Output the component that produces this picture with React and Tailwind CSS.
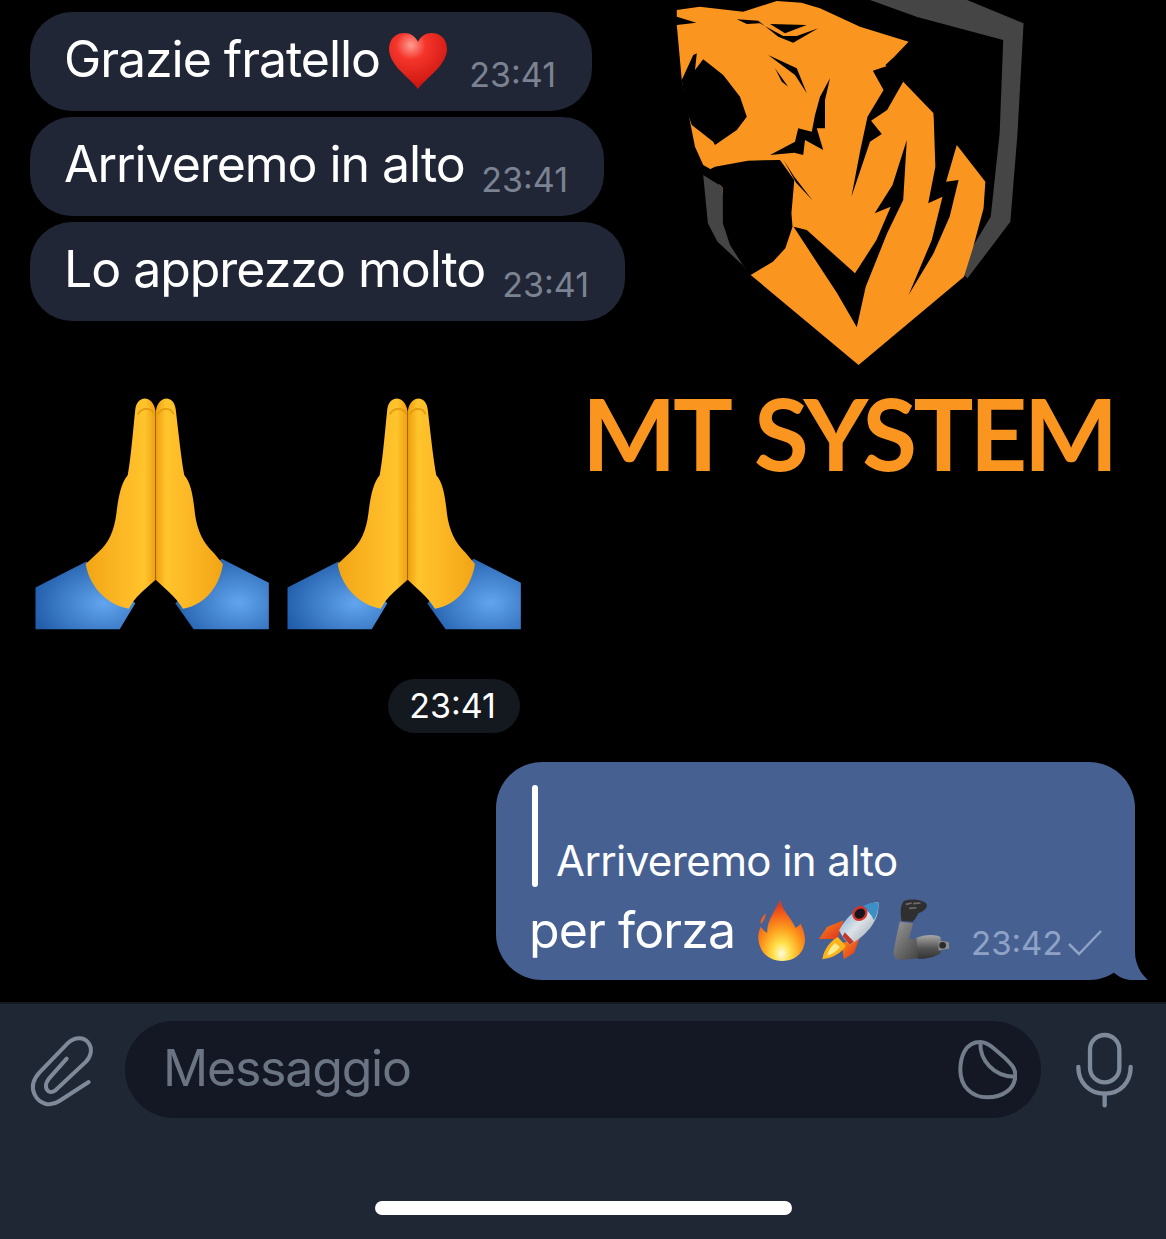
const FONT = 'font-["Inter","Liberation_Sans",sans-serif]';

const INCOMING = [
  { text: 'Grazie fratello', width: 'w-[562px]', heart: true },
  { text: 'Arriveremo in alto', width: 'w-[574px]' },
  { text: 'Lo apprezzo molto', width: 'w-[595px]' },
];

function Heart() {
  return (
    <svg width="60" height="58" viewBox="0 0 62 60" className="ml-[8px] mb-[2px] shrink-0">
      <defs>
        <radialGradient id="heartFill" cx="0.38" cy="0.22" r="0.85">
          <stop offset="0" stopColor="#ff9d92" />
          <stop offset="0.3" stopColor="#f5352b" />
          <stop offset="1" stopColor="#c40f0b" />
        </radialGradient>
      </defs>
      <path d="M31 59C24 48 2 36 1 18C1 7 8 1 17 1C23 1 28 4 31 10C34 4 39 1 45 1C54 1 61 7 61 18C60 36 38 48 31 59Z" fill="url(#heartFill)" />
    </svg>
  );
}

function TigerLogo() {
  // traced from the reference, stretched box so coordinates follow the crop
  return (
    <svg className="absolute left-[580px] top-0 h-[490px] w-[560px]" viewBox="0 0 1568 1470" preserveAspectRatio="none">
      <path fill="#454545" d="M812 0L1084 0L1242 70L1225 400L1205 665L1085 835L1060 810L1150 650L1175 400L1185 120L944 51Z" />
      <path fill="#fa951f" d="M271 30L335 20L457 35L551 3L620 8L672 25L784 80L920 125L880 170L855 195L905 245L990 340L1000 440L1055 435L1135 545L1130 625L1100 745L1075 830L780 1095L478 825L378 515L345 495L322 440L285 240L271 75L326 68L271 50Z" />
      <path fill="#000" d="M285 240L317 165L327 160L322 210L345 178L401 225L448 290L467 350L439 390L378 435L373 425L313 375L298 330Z" />
      <path fill="#000" d="M360 510L378 500L470 482L560 480L600 540L592 640L595 680L575 745L540 785L478 825L465 815L420 735L400 670L400 565L372 530Z" />
      <path fill="#454545" d="M345 525L400 562L400 670L420 735L468 815L455 795L385 725L358 670Z" />
      <path fill="#000" d="M439 58L499 62L555 110L597 128L667 85L607 108L569 108L504 70L467 72Z" />
      <path fill="#000" d="M532 72L635 75L574 100Z" />
      <path fill="#000" d="M527 165L607 205L635 280L602 225ZM546 205L583 260L565 245Z" />
      <path fill="#000" d="M700 235L672 290L658 345L649 395L611 385L602 425L532 465L600 458L625 465L630 420L681 450L663 385L686 385L686 300Z" />
      <path fill="#000" d="M570 480L600 530L652 602L605 548Z" />
      <path fill="#000" d="M820 212L868 195L905 245L860 330L815 362L845 402L812 425L760 590L785 450L805 350L850 270Z" />
      <path fill="#000" d="M598 680L635 690L770 820L830 720L870 620L825 640L875 555L915 420L905 600L860 700L800 860L775 982L720 880L610 700Z" />
      <path fill="#000" d="M990 340L1055 435L1025 545L1060 540L1035 650L990 760L920 885L985 720L1015 590L975 610L995 500Z" />
    </svg>
  );
}

function PrayingHands() {
  return (
    <svg width="234" height="233" viewBox="45 50 700 700" className="shrink-0">
      <defs>
        <linearGradient id="palmLeft" x1="0" y1="0" x2="1" y2="0">
          <stop offset="0" stopColor="#f2a516" />
          <stop offset="0.55" stopColor="#fdb926" />
          <stop offset="0.85" stopColor="#ffc42c" />
          <stop offset="1" stopColor="#efa012" />
        </linearGradient>
        <linearGradient id="palmRight" x1="1" y1="0" x2="0" y2="0">
          <stop offset="0" stopColor="#f2a516" />
          <stop offset="0.55" stopColor="#fdb926" />
          <stop offset="0.85" stopColor="#ffc42c" />
          <stop offset="1" stopColor="#efa012" />
        </linearGradient>
        <radialGradient id="sleeveFill" cx="0.68" cy="0.62" r="0.75">
          <stop offset="0" stopColor="#62a5ee" />
          <stop offset="1" stopColor="#1f5ba8" />
        </radialGradient>
      </defs>
      <path fill="url(#sleeveFill)" d="M45 622L198 544L345 670L298 748L45 748Z" />
      <path fill="url(#sleeveFill)" d="M746 608L604 536L465 670L520 748L746 748Z" />
      <path fill="url(#palmLeft)" d="M405 90C398 45 352 42 345 85C338 150 332 230 322 285C305 305 295 340 288 400C282 450 265 490 232 518L196 552C205 610 250 672 325 686C345 650 370 632 405 600Z" />
      <path fill="url(#palmRight)" d="M407 90C414 45 460 42 466 85C474 150 482 230 492 285C510 305 518 340 524 400C530 450 550 490 580 518L608 552C600 610 560 675 488 686C465 650 440 632 407 600Z" />
      <path fill="none" stroke="#e49a10" strokeWidth="5" d="M352 102C365 80 392 80 402 102M412 102C425 80 452 80 460 102" />
      <path fill="none" stroke="#dc920c" strokeWidth="2" d="M406 92L406 600" />
    </svg>
  );
}

function Fire() {
  return (
    <svg width="50" height="62" viewBox="22 28 145 187" className="shrink-0">
      <defs>
        <radialGradient id="fireFill" cx="0.5" cy="0.88" r="0.8">
          <stop offset="0" stopColor="#fffbe0" />
          <stop offset="0.22" stopColor="#ffe14d" />
          <stop offset="0.5" stopColor="#fda21e" />
          <stop offset="0.8" stopColor="#f3601a" />
          <stop offset="1" stopColor="#e23a1c" />
        </radialGradient>
      </defs>
      <path d="M90 30C92 60 120 80 135 115C142 112 148 108 150 102C162 125 170 150 158 178C145 205 120 215 95 215C65 215 38 200 28 170C20 150 22 130 30 112C36 120 42 126 50 130C48 95 70 70 90 30Z" fill="url(#fireFill)" />
      <path d="M46 72C34 82 28 92 31 104C38 96 44 86 46 72Z" fill="#f3601a" />
    </svg>
  );
}

function Rocket() {
  return (
    <svg width="62" height="59" viewBox="205 35 185 175" className="shrink-0">
      <defs>
        <linearGradient id="rocketBody" x1="0" y1="0" x2="1" y2="1">
          <stop offset="0" stopColor="#5b9bd0" />
          <stop offset="0.5" stopColor="#dde3e8" />
          <stop offset="1" stopColor="#8895a4" />
        </linearGradient>
        <linearGradient id="rocketFin" x1="0" y1="0" x2="1" y2="1">
          <stop offset="0" stopColor="#fb8f1c" />
          <stop offset="1" stopColor="#dd2a1c" />
        </linearGradient>
      </defs>
      <path d="M208 148L232 112L282 92L262 148Z" fill="url(#rocketFin)" />
      <path d="M282 208L276 160L328 148L312 190Z" fill="url(#rocketFin)" />
      <path d="M264 142L288 168C275 190 248 205 218 208C222 180 240 155 264 142Z" fill="#fbb31e" />
      <path d="M256 160L270 172C262 185 248 193 232 198C236 182 244 170 256 160Z" fill="#ffeb8c" />
      <path d="M268 122C290 78 335 42 385 38C390 85 360 130 300 165C288 155 276 140 268 122Z" fill="url(#rocketBody)" />
      <path d="M385 38C387 55 382 75 372 92C362 72 350 60 335 52C350 44 367 38 385 38Z" fill="#3d8fc7" />
      <path d="M278 140L300 165L312 156L285 128Z" fill="#c23a2a" />
      <ellipse cx="330" cy="72" rx="24" ry="21" fill="#d4332a" transform="rotate(-40 330 72)" />
      <ellipse cx="330" cy="72" rx="17" ry="14" fill="#17151c" transform="rotate(-40 330 72)" />
    </svg>
  );
}

function MechanicalArm() {
  return (
    <svg width="57" height="62" viewBox="430 28 170 185" className="shrink-0">
      <defs>
        <linearGradient id="armFill" x1="0" y1="0" x2="1" y2="1">
          <stop offset="0" stopColor="#9a9a9a" />
          <stop offset="0.5" stopColor="#6a6a6a" />
          <stop offset="1" stopColor="#3a3a3a" />
        </linearGradient>
        <linearGradient id="bicepFill" x1="0" y1="0" x2="0" y2="1">
          <stop offset="0" stopColor="#a8a8a8" />
          <stop offset="0.55" stopColor="#555" />
          <stop offset="1" stopColor="#333" />
        </linearGradient>
      </defs>
      <path d="M462 34C480 26 515 28 530 42C534 54 522 66 506 70C500 82 495 92 488 96L456 94C452 76 450 50 462 34Z" fill="#2f2f2f" />
      <path d="M468 44L486 40M490 42L512 40M478 56L500 54" stroke="#6c6c6c" strokeWidth="5" fill="none" />
      <path d="M450 96L490 100L478 146C490 150 502 146 510 142L520 204L450 210C436 208 430 198 432 184C436 155 444 125 450 96Z" fill="url(#armFill)" />
      <path d="M500 144C520 134 560 132 572 142L572 190C552 204 520 208 505 206Z" fill="url(#bicepFill)" />
      <path d="M566 152L596 156L598 176L566 182Z" fill="#8c8c8c" />
      <circle cx="578" cy="166" r="10" fill="#2a2a2a" />
    </svg>
  );
}

function Paperclip() {
  return (
    <svg width="80" height="80" viewBox="60 80 240 240" fill="none" stroke="#7e8a9a" strokeWidth="12" strokeLinecap="round" className="shrink-0">
      <path d="M266 236L178 293C150 312 118 302 104 274C92 250 100 228 118 208L205 118C225 100 252 100 265 118C278 135 274 158 258 175L165 262C150 272 136 262 138 244C139 235 145 228 152 220L200 166" />
    </svg>
  );
}

function StickerIcon() {
  return (
    <svg width="60" height="60" viewBox="80 90 180 180" fill="none" stroke="#727c8b" strokeWidth="12" strokeLinejoin="round" className="shrink-0">
      <path d="M150 96C105 96 90 140 90 180C90 230 125 262 170 262C220 262 255 235 255 195C255 175 245 165 225 145L190 115C175 102 165 96 150 96Z" />
      <path d="M150 97C148 150 190 200 252 200" />
    </svg>
  );
}

function Mic() {
  return (
    <svg width="60" height="76" viewBox="434 65 172 228" fill="none" stroke="#7e8a9a" strokeWidth="13" strokeLinecap="round" className="shrink-0">
      <rect x="478" y="74" width="88" height="142" rx="44" />
      <path d="M443 170C443 215 475 250 522 250C570 250 600 215 600 170" />
      <path d="M522 250L522 285" />
    </svg>
  );
}

export default function App() {
  return (
    <div className={`relative h-[1239px] w-[1166px] overflow-hidden bg-black ${FONT}`}>
      {/* wallpaper */}
      <TigerLogo />
      <div className="absolute left-[582px] top-[372px] font-['Lato',sans-serif] text-[100px] font-bold leading-[120px] tracking-[-3.6px] [word-spacing:7px] whitespace-nowrap text-[#fa951f]">
        MT SYSTEM
      </div>

      <div className="relative flex h-[1002px] flex-col pl-[30px] pt-[12px]">
        <div className="flex flex-col gap-[6px]">
          {INCOMING.map((m) => (
            <div key={m.text} className={`flex h-[99px] items-center rounded-[42px] bg-[#202636] pl-[34px] pr-[36px] ${m.width}`}>
              <span className="mb-[6px] text-[50px] leading-none tracking-[-1.05px] whitespace-nowrap text-white">{m.text}</span>
              {m.heart && <Heart />}
              <span className="ml-auto mt-[26px] text-[34px] leading-none text-[#7b8392]">23:41</span>
            </div>
          ))}
        </div>

        <div className="mt-[76px] ml-[5px] flex gap-[18px]">
          <PrayingHands />
          <PrayingHands />
        </div>

        <div className="mt-[49px] ml-[358px] flex h-[54px] w-[132px] items-center justify-center rounded-full bg-[#14181f] pb-[2px] pr-[3px] text-[34px] text-white">
          23:41
        </div>

        <div className="relative mt-[29px] ml-[466px] h-[218px] w-[639px] rounded-[46px] bg-[#476092] pl-[36px] pt-[23px]">
          <div className="flex items-end gap-[18px]">
            <div className="h-[102px] w-[6px] rounded-full bg-white" />
            <span className="mb-[3px] text-[42px] leading-[46px] tracking-[-0.6px] text-white">Arriveremo in alto</span>
          </div>
          <div className="mt-[12px] ml-[-3px] flex items-center">
            <span className="text-[50px] leading-[60px] tracking-[-0.9px] text-white">per forza</span>
            <div className="ml-[22px] flex items-center">
              <Fire />
              <div className="ml-[11px]"><Rocket /></div>
              <div className="ml-[13px]"><MechanicalArm /></div>
            </div>
            <span className="ml-[21px] mt-[26px] text-[33px] leading-none text-[#8fa3c6]">23:42</span>
            <svg width="34" height="26" viewBox="0 0 34 26" fill="none" stroke="#8fa3c6" strokeWidth="2.5" className="ml-[5px] mt-[26px]">
              <path d="M1 14L11 24L33 1" />
            </svg>
          </div>
          {/* tail */}
          <svg width="40" height="50" viewBox="0 0 40 50" className="absolute bottom-0 right-[-15px]">
            <path d="M3 42C10 48 16 50 22 50L38 50C31 44 25 34 25 22L25 4L0 20Z" fill="#476092" />
          </svg>
        </div>
      </div>

      {/* composer */}
      <div className="relative h-[237px] border-t-2 border-[#141922] bg-[#1f2634]">
        <div className="flex items-center pl-[20px] pr-[32px] pt-[17px]">
          <Paperclip />
          <div className="ml-[25px] flex h-[97px] w-[916px] items-center justify-between rounded-full bg-[#131824] pl-[38px] pr-[24px]">
            <span className="mb-[3px] text-[50px] leading-none tracking-[-1.2px] text-[#6b7483]">Messaggio</span>
            <StickerIcon />
          </div>
          <div className="ml-auto"><Mic /></div>
        </div>
        <div className="absolute bottom-[24px] left-[375px] h-[14px] w-[417px] rounded-full bg-white" />
      </div>
    </div>
  );
}
